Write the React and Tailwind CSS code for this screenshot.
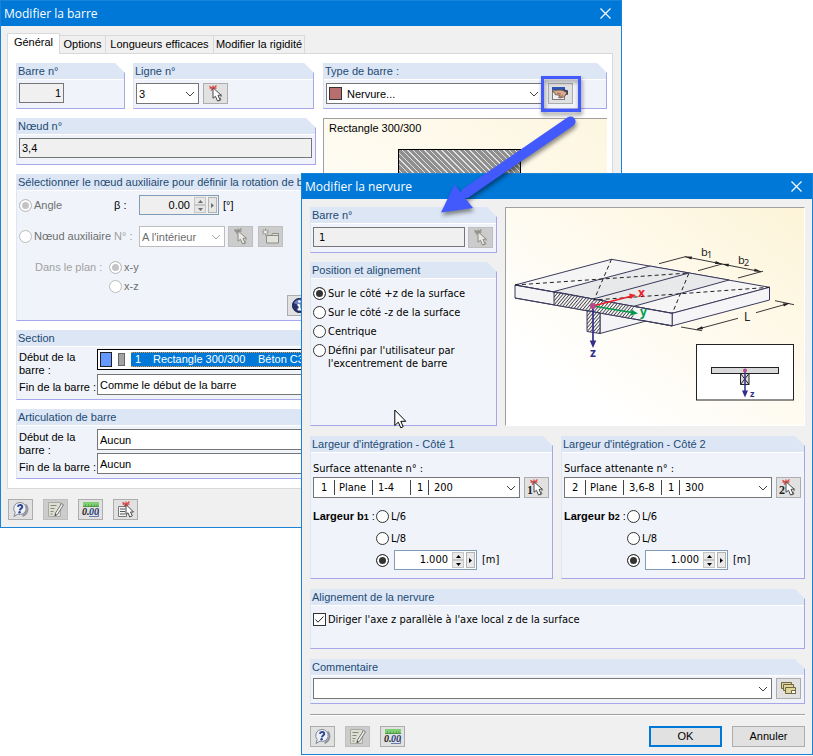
import React from "react";

const INK = "#3c3a5c";

function Chevron({ muted }) {
  return (
    <svg
      className="pointer-events-none absolute right-1 top-1/2 -translate-y-1/2"
      width="10"
      height="7"
      viewBox="0 0 10 7"
      fill="none"
      stroke={muted ? "#a8a8a8" : "#404040"}
      aria-hidden="true"
    >
      <path d="M1 1.5 5 5.5 9 1.5" />
    </svg>
  );
}

function Combo({ id, label, value, muted, swatch, className = "", children }) {
  return (
    <div className={`relative h-[21px] ${className}`}>
      <select
        id={id}
        aria-label={label}
        disabled={muted}
        className={`block h-full w-full appearance-none rounded-none border bg-white pr-4 leading-4 opacity-100 outline-none ${
          muted ? "border-[#bdbdbd] text-[#6d6d6d]" : "border-[#767676]"
        } ${swatch ? "pl-5" : "pl-0.5"} ${children ? "text-transparent" : ""}`}
      >
        <option>{value}</option>
      </select>
      {swatch && (
        <span className="pointer-events-none absolute left-[3px] top-1 size-[13px] border border-[#333] bg-[#b76e6e]" />
      )}
      {children}
      <Chevron muted={muted} />
    </div>
  );
}

function Group({ title, className = "", bodyClass = "", children }) {
  return (
    <section
      className={`flex flex-col border-b border-l border-r border-b-[#a6a6e8] border-l-[#dce6f4] border-r-[#a6a6e8] bg-[#f0f4fa] [clip-path:polygon(0_0,calc(100%-10px)_0,100%_10px,100%_100%,0_100%)] ${className}`}
    >
      <h2 className="h-[17px] shrink-0 whitespace-nowrap border-b border-white bg-[#dce6f4] pl-px font-['Liberation_Sans',Arial,sans-serif] text-[11px] leading-4 text-[#1d4a75]">
        {title}
      </h2>
      <div className={bodyClass}>{children}</div>
    </section>
  );
}

function IconButton({ label, muted, children }) {
  return (
    <button
      type="button"
      aria-label={label}
      disabled={muted}
      className={`flex h-[21px] w-[25px] shrink-0 items-center justify-center border ${
        muted ? "border-[#bfbfbf] bg-[#cccccc]" : "border-[#adadad] bg-[#e1e1e1]"
      }`}
    >
      {children}
    </button>
  );
}

function PickIcon({ digit, muted }) {
  return (
    <svg width="21" height="19" viewBox="0 0 21 19" aria-hidden="true">
      <path
        d="M4.500 2.200 10 6M11.500 1.500 6 6.500M4.500 4.200H11.500M8 1.500V4"
        stroke={muted ? "#8f8f8b" : "#dc4a4a"}
        strokeWidth="1.300"
      />
      <path d="M16 9.500 17.300 12.500 15 12.500 16.500 16 13.500 17.800Z" fill={muted ? "#a3a39f" : "#777"} />
      <path
        d="M8 3.800V14.200L10.500 12.300 12.500 17 15 15.800 13 11.400 16 11Z"
        fill={muted ? "#e9e9e4" : "#fff"}
        stroke={muted ? "#8a8a85" : "#4b4b4b"}
      />
      {digit && (
        <text x="1" y="16" fontFamily="Liberation Serif, serif" fontSize="12" fontWeight="700" fill="#222">
          {digit}
        </text>
      )}
    </svg>
  );
}

function NewNodeIcon() {
  return (
    <svg width="21" height="19" viewBox="0 0 21 19" aria-hidden="true">
      <path d="M6.500 8.500h5l1-2h6v9.500h-12z" fill="#e2e2dc" stroke="#8c8c86" />
      <path d="M7 8.500h11.500" stroke="#8c8c86" />
      <path d="M5.500 1.500v7M2 5h7M3 2.500l5 5M8 2.500l-5 5" stroke="#8b8b85" />
      <circle cx="5.500" cy="5" r="1.500" fill="#eee" />
    </svg>
  );
}

function HandIcon() {
  return (
    <svg width="21" height="17" viewBox="0 0 21 17" aria-hidden="true">
      <rect x="2.500" y="2.500" width="12" height="12" fill="#eef0f3" stroke="#7c7c7c" />
      <path d="M2 2h13v3.500H2z" fill="#2f55b4" />
      <path d="M13 4l5 1.500v4l-4 1z" fill="#2c3c6e" />
      <path
        d="M2.500 6.500C6 4.800 10 4.800 13 5.500l4 2-2 3.500c-2 2-4.500 2-6.500 1.500L10 10.500 5 9.500 5 8z"
        fill="#d8ab90"
        stroke="#6f4b3c"
        strokeWidth=".8"
      />
      <path d="M7 8l4 1M10 12l3-1.500" stroke="#6f4b3c" strokeWidth=".7" />
    </svg>
  );
}

function HelpIcon() {
  return (
    <svg width="17" height="17" viewBox="0 0 17 17" aria-hidden="true">
      <path d="M13.500 3.500a7 7 0 0 1-3 11.500" fill="none" stroke="#8f949e" strokeWidth="2" />
      <path d="M8 1.500a6 6 0 1 1-2 11.600L2 15.500l1.200-4A6 6 0 0 1 8 1.500z" fill="#eef1f8" stroke="#85888f" />
      <path d="M5.800 5.800C6.300 3.400 10.600 3.600 10.200 6c-.2 1.500-2.100 1.500-2.300 3.300" fill="none" stroke="#2c4793" strokeWidth="2" />
      <circle cx="7.600" cy="11.300" r="1.200" fill="#2c4793" />
    </svg>
  );
}

function NoteIcon() {
  return (
    <svg width="21" height="17" viewBox="0 0 21 17" aria-hidden="true">
      <path d="M3.500 1.500h12v14h-12z" fill="#dddfd3" stroke="#a9aaa2" />
      <path d="M5.500 4.500h6M5.500 7.500h4M5.500 10.500h3M5.500 13h2" stroke="#85867e" />
      <path d="M10.500 12 16.500 2.500l2 1.300-6 9.500-2.500 1.700z" fill="#efefe9" stroke="#777" />
      <path d="M9.500 15l.8-2.300 1.500 1z" fill="#444" />
    </svg>
  );
}

function UnitsIcon() {
  return (
    <svg width="21" height="17" viewBox="0 0 21 17" aria-hidden="true">
      <rect x="3" y="1" width="16" height="5" fill="#7fd072" />
      <path d="M3 5.500h16M5.500 5V3.500M8.500 5V3.500M11.500 5V3.500M14.500 5V3.500M17 5V3.500" stroke="#4f9a46" />
      <path d="M9 15.500h9.500V8" fill="none" stroke="#6b7bb0" />
      <text x="2" y="14" fontFamily="Liberation Serif, serif" fontStyle="italic" fontWeight="700" fontSize="10" fill="#222">
        0.
      </text>
      <text x="9" y="14" fontFamily="Liberation Serif, serif" fontStyle="italic" fontWeight="700" fontSize="10" fill="#2b3e78">
        00
      </text>
    </svg>
  );
}

function ListPickIcon() {
  return (
    <svg width="21" height="19" viewBox="0 0 21 19" aria-hidden="true">
      <path d="M3.500 6.500h8v10h-8z" fill="#f5f5f5" stroke="#777" />
      <path d="M5 9h5M5 11.500h5M5 14h5" stroke="#555" />
      <path d="M7.500 2.200 13 6M14.500 1.500 9 6.500M7.500 4.200H14.500M11 1.500V4" stroke="#dc4a4a" strokeWidth="1.300" />
      <path d="M11 4.500V14.500L13 12.800 14.800 17 17.300 15.800 15.500 12H18.500z" fill="#fff" stroke="#444" />
    </svg>
  );
}

function InfoIcon() {
  return (
    <svg width="17" height="17" viewBox="0 0 17 17" aria-hidden="true">
      <circle cx="8.500" cy="8.500" r="7" fill="#24336e" stroke="#111a42" />
      <path d="M3 6a6 6 0 0 1 11 0c-3 2-8 2-11 0z" fill="#6f82bb" />
      <path d="M8.500 7.500v5M6.500 8h2M6.500 12.500h4" stroke="#fff" strokeWidth="2" />
      <circle cx="8.300" cy="4.500" r="1.300" fill="#fff" />
    </svg>
  );
}

function CardsIcon() {
  return (
    <svg width="19" height="15" viewBox="0 0 19 15" fill="#e0d59b" stroke="#70673e" aria-hidden="true">
      <path d="M2.500 1.500h10v6h-10z" />
      <path d="M4.500 3.500h10v6h-10z" />
      <path d="M6.500 6.500h10v6h-10z" />
      <path d="M12.500 9.500h4v3h-4z" fill="#fff" />
    </svg>
  );
}

function Radio({ name, label, checked, muted, labelClass = "" }) {
  return (
    <label className={`flex items-start gap-[2px] leading-[13px] ${muted ? "text-[#6d6d6d]" : ""} ${labelClass}`}>
      <input
        type="radio"
        name={name}
        defaultChecked={checked}
        disabled={muted}
        aria-label={label ? undefined : "Valeur définie"}
        className="size-[13px] shrink-0 appearance-none rounded-full border border-[#333] bg-white checked:bg-[#333] checked:shadow-[inset_0_0_0_2px_white] disabled:border-[#bcbcbc] checked:disabled:bg-[#c4c4c4]"
      />
      {label}
    </label>
  );
}

function Spinner({ id, label, value, muted, className = "" }) {
  const arrow = muted ? "#6d6d6d" : "#000";
  const face = muted ? "bg-[#e6e6e6]" : "bg-[#e9e9e9]";
  return (
    <div className={`flex h-5 items-stretch border border-[#7f9db9] p-px ${muted ? "bg-[#efefef]" : "bg-white"} ${className}`}>
      <input
        id={id}
        aria-label={label}
        defaultValue={value}
        readOnly={muted}
        className="w-0 min-w-0 flex-1 bg-transparent pr-1 text-right outline-none"
      />
      <div className="flex w-3 flex-col">
        <button type="button" aria-label="Augmenter" className={`flex flex-1 items-center justify-center border border-[#c6c6c6] ${face}`}>
          <svg width="5" height="3" viewBox="0 0 5 3"><path d="M2.500 0 5 3H0z" fill={arrow} /></svg>
        </button>
        <button type="button" aria-label="Diminuer" className={`flex flex-1 items-center justify-center border border-[#c6c6c6] ${face}`}>
          <svg width="5" height="3" viewBox="0 0 5 3"><path d="M2.500 3 5 0H0z" fill={arrow} /></svg>
        </button>
      </div>
      <button type="button" aria-label="Choisir" className={`ml-0.5 flex w-[9px] items-center justify-center border border-[#b4b4b4] ${face}`}>
        <svg width="3" height="5" viewBox="0 0 3 5"><path d="M0 0 3 2.500 0 5z" fill={arrow} /></svg>
      </button>
    </div>
  );
}

function TitleBar({ title }) {
  return (
    <header className="flex h-[25px] items-center justify-between bg-[#0078d7] pl-[3px] pr-2.5 font-['Open_Sans','Noto_Sans',sans-serif] text-xs text-white">
      <h1>{title}</h1>
      <button type="button" aria-label="Fermer">
        <svg width="11" height="11" viewBox="0 0 11 11" stroke="#fff" strokeWidth="1.200">
          <path d="M.5.5l10 10M10.500.5l-10 10" />
        </svg>
      </button>
    </header>
  );
}

function EndRows({ prefix, first, second, gap }) {
  return (
    <>
      <div className="flex w-20 shrink-0 flex-col pl-0.5 pt-0.5 leading-[13px]">
        <label htmlFor={`${prefix}-start`} className="w-16">Début de la barre :</label>
        <label htmlFor={`${prefix}-end`} className="mt-1 whitespace-nowrap">Fin de la barre :</label>
      </div>
      <div className={`flex flex-1 flex-col ${gap}`}>
        {first}
        {second}
      </div>
    </>
  );
}

function BarDialog() {
  const tabs = ["Options", "Longueurs efficaces", "Modifier la rigidité"];
  return (
    <div className="absolute left-0 top-0 w-[622px] border border-[#1883d7] bg-[#f0f0f0] font-['Liberation_Sans',Arial,sans-serif] text-[11px]">
      <TitleBar title="Modifier la barre" />
      <div className="pb-[7px] pl-1.5 pr-2 pt-[7px]">
        <div role="tablist" className="flex items-end">
          <button type="button" role="tab" aria-selected="true" className="relative z-10 -mb-px h-[21px] w-[53px] border border-b-0 border-[#d9d9d9] bg-white pb-1">
            Général
          </button>
          {tabs.map((t, i) => (
            <button
              key={t}
              type="button"
              role="tab"
              aria-selected="false"
              className={`h-[18px] whitespace-nowrap border-r border-t border-[#d9d9d9] ${i === 0 ? "w-[46px]" : i === 1 ? "w-[108px]" : "w-[91px]"}`}
            >
              {t}
            </button>
          ))}
        </div>
        <div role="tabpanel" className="flex flex-col gap-[9px] border border-[#d9d9d9] bg-white pb-[9px] pl-2 pr-[5px] pt-[9px]">
          <div className="flex gap-[7px]">
            <div className="flex w-[300px] flex-col gap-[9px]">
              <div className="flex gap-2 pr-0.5">
                <Group title="Barre n°" className="h-[46px] w-[109px]" bodyClass="pl-0.5 pt-[3px]">
                  <input aria-label="Barre n°" readOnly value="1" className="block h-5 w-[45px] border border-[#767676] bg-[#f0f0f0] pr-0.5 text-right outline-none" />
                </Group>
                <Group title="Ligne n°" className="h-[46px] flex-1" bodyClass="flex gap-1 pl-0.5 pt-[3px]">
                  <Combo label="Ligne n°" value="3" className="w-[63px]" />
                  <IconButton label="Sélectionner la ligne"><PickIcon /></IconButton>
                </Group>
              </div>
              <Group title="Nœud n°" className="h-[47px]" bodyClass="pl-0.5 pr-[3px] pt-[3px]">
                <input aria-label="Nœud n°" readOnly value="3,4" className="block h-5 w-full border border-[#767676] bg-[#f0f0f0] pl-0.5 outline-none" />
              </Group>
              <Group
                title="Sélectionner le nœud auxiliaire pour définir la rotation de barre"
                className="h-[147px]"
                bodyClass="flex flex-1 flex-col pl-0.5 pr-[3px] pt-1"
              >
                <div className="flex items-center">
                  <Radio name="aux" label="Angle" checked muted labelClass="w-[95px]" />
                  <label htmlFor="beta" className="w-[25px]">β :</label>
                  <Spinner id="beta" label="Angle β" value="0.00" muted className="w-20" />
                  <span className="ml-1">[°]</span>
                </div>
                <div className="mt-[11px] flex items-center">
                  <Radio name="aux" label="Nœud auxiliaire" muted labelClass="w-[95px] whitespace-nowrap" />
                  <label htmlFor="auxnode" className="w-[25px] text-[#a0a0a0]">N° :</label>
                  <Combo id="auxnode" value="A l'intérieur" muted className="w-[86px]" />
                  <div className="ml-[3px] flex gap-[5px]">
                    <IconButton label="Sélectionner le nœud" muted><PickIcon muted /></IconButton>
                    <IconButton label="Nouveau nœud" muted><NewNodeIcon /></IconButton>
                  </div>
                </div>
                <div className="mt-3.5 flex pl-4">
                  <span className="w-[74px] leading-[13px] text-[#a0a0a0]">Dans le plan :</span>
                  <div className="flex flex-col gap-1.5">
                    <Radio name="plane" label="x-y" checked muted />
                    <Radio name="plane" label="x-z" muted />
                  </div>
                </div>
                <div className="mt-0.5 flex justify-end">
                  <IconButton label="Informations"><InfoIcon /></IconButton>
                </div>
              </Group>
            </div>
            <div className="flex min-w-0 flex-1 flex-col gap-[9px]">
              <Group title="Type de barre :" className="h-[46px]" bodyClass="flex gap-[5px] pl-0.5 pt-[3px]">
                <Combo label="Type de barre" value="Nervure..." swatch className="w-[217px]" />
                <IconButton label="Modifier le type de barre"><HandIcon /></IconButton>
              </Group>
              <div className="flex-1 border-l border-t border-[#a0a0a0] bg-linear-to-tr from-white to-[#fdf6e0] px-[5px] pt-px">
                <p>Rectangle 300/300</p>
                <div className="ml-[69px] mt-3 size-[123px] border border-black bg-[repeating-linear-gradient(45deg,#8f8f8f_0_3px,#e0e0e0_3px_4px)]" />
              </div>
            </div>
          </div>
          <Group title="Section" className="h-[70px]" bodyClass="flex pt-0.5">
            <EndRows
              prefix="section"
              gap="gap-1"
              first={
                <Combo id="section-start" value="1 Rectangle 300/300 Béton C30/37">
                  <span className="pointer-events-none absolute inset-0 flex items-stretch whitespace-pre border border-black bg-white p-0.5 text-white" aria-hidden="true">
                    <i className="w-3 shrink-0 border border-[#222] bg-[#6699ff]" />
                    <i className="mx-1.5 my-px w-[7px] shrink-0 border border-[#666] bg-[#a3a3a3]" />
                    <span className="flex flex-1 items-center border-y border-dotted border-[#f79433] bg-[#0078d7] pl-1">
                      <b className="w-[18px] font-normal">1</b>
                      <b className="w-[105px] font-normal">Rectangle 300/300</b>
                      <b className="font-normal">Béton C30/37</b>
                    </span>
                  </span>
                </Combo>
              }
              second={<Combo id="section-end" value="Comme le début de la barre" />}
            />
          </Group>
          <Group title="Articulation de barre" className="h-[70px]" bodyClass="flex pt-[3px]">
            <EndRows
              prefix="hinge"
              gap="gap-[3px]"
              first={<Combo id="hinge-start" value="Aucun" />}
              second={<Combo id="hinge-end" value="Aucun" />}
            />
          </Group>
        </div>
        <div className="mt-2.5 flex gap-2.5 pl-px">
          <IconButton label="Aide"><HelpIcon /></IconButton>
          <IconButton label="Commentaire" muted><NoteIcon /></IconButton>
          <IconButton label="Unités et décimales"><UnitsIcon /></IconButton>
          <IconButton label="Sélection dans la liste"><ListPickIcon /></IconButton>
        </div>
      </div>
    </div>
  );
}

function RibDiagram() {
  const sans = "Noto Sans, Open Sans, sans-serif";
  return (
    <svg className="block h-auto w-full" viewBox="506 208 298 217" fill="none" role="img" aria-label="Nervure sous une dalle">
      <defs>
        <pattern id="hatch" width="2.500" height="2.500" patternUnits="userSpaceOnUse" patternTransform="rotate(40)">
          <rect width="2.500" height="2.500" fill="#f2f2f4" />
          <path d="M0 0V2.500" stroke="#222" strokeWidth="1.400" />
        </pattern>
      </defs>
      <g stroke={INK} strokeWidth="1" strokeLinejoin="round">
        <path d="M587 311 600 313V333.500L646 321 672 326 600 305z" fill="#f4f4f6" />
        <path d="M515 285 611.500 259.300 769.500 287.300 672.300 313.300z" fill="#f5f5f6" />
        <path d="M554 291.500 650 266 729 280 633 306.500z" fill="#e8e9ea" />
        <path d="M593 299 689 273" />
        <path d="M515 285 672.300 313.300V325.800L515 298z" fill="#f5f5f6" />
        <path d="M672.300 313.300 769.500 287.300V300L672.300 325.800z" fill="#f5f5f8" />
        <path d="M554 292 633.500 306.500V319L554 305z" fill="url(#hatch)" stroke="none" />
        <path d="M554 292V305" />
        <path d="M587 310.500 600 313V333.500L587 331.500z" fill="url(#hatch)" />
        <path d="M515 285 672.300 313.300M515 298 672.300 325.800" />
      </g>
      <g stroke="#222" strokeDasharray="4 3">
        <path d="M515 285 689 273 672.300 313.300M611.500 259.300 594 300 769.500 287.300" />
      </g>
      <g stroke="#222" strokeWidth=".9">
        <path d="M659 263.700 686 256.500M698 270.700 722 264M738 278 763 271.200M685 256.700 761 271.700" />
        <path d="M775 300.700 794 304.700M789 303.300 756 312.700M738 318.300 697 329.300M681 327 702 330.700" />
      </g>
      <g fill="#222">
        <path d="M685 256.700l7-.2-.6 3zM722 264l-7-.1.700-3zM722 264l7-.2-.6 3zM761 271.500l-7 .1.700-3zM790 303l-7 .5.900 3zM696 329.500l7-.3-.9-3z" />
        <g fontFamily={sans} fontSize="11">
          <text x="701" y="256">b</text>
          <text x="738" y="264">b</text>
          <text x="744" y="321" fontSize="12">L</text>
        </g>
        <g fontFamily={sans} fontSize="9">
          <text x="707" y="258">1</text>
          <text x="744" y="266">2</text>
        </g>
      </g>
      <path d="M593 306 630 296.500" stroke="#e8232a" strokeWidth="1.500" />
      <path d="M636 295 629 293.500 630.500 299z" fill="#e8232a" />
      <path d="M593 306 632 312.500" stroke="#009b4a" strokeWidth="1.500" />
      <path d="M638 313.500 631.500 309.500 630.500 315.500z" fill="#009b4a" />
      <path d="M593 306V342" stroke="#342d8c" strokeWidth="1.700" />
      <path d="M593 348 589.700 340.500H596.300z" fill="#342d8c" />
      <circle cx="593" cy="306" r="3" fill="#b8488a" />
      <g fontFamily={sans} fontWeight="700" fontSize="12">
        <text x="638" y="297" fill="#e8232a">x</text>
        <text x="640" y="316" fill="#009b4a">y</text>
        <text x="590" y="357" fill="#342d8c">z</text>
      </g>
      <rect x="696.500" y="344.500" width="97" height="55.500" fill="#fff" stroke="#222" />
      <rect x="711.500" y="367.500" width="67" height="6" fill="#d8d9da" stroke="#222" />
      <path d="M740.500 373.500h8.500v11h-8.500zl8.500 11m0-11-8.500 11" fill="#ddd" stroke="#222" />
      <path d="M745 371V392" stroke="#342d8c" strokeWidth="1.500" />
      <path d="M745 397.500 742 390.500H748z" fill="#342d8c" />
      <circle cx="745" cy="370.500" r="2" fill="#b8488a" />
      <text x="750" y="397" fontFamily={sans} fontWeight="700" fontSize="9" fill="#342d8c">z</text>
    </svg>
  );
}

function WidthGroup({ side, cells }) {
  const widths = ["w-[21px] pl-[7px]", "w-[38px] pl-1", "w-[38px] pl-[5px]", "w-[18px] pl-1.5", "pl-[5px]"];
  return (
    <Group title={`Largeur d'intégration - Côté ${side}`} className="h-[143px] min-w-0 flex-1" bodyClass="pl-0.5 pr-[3px] pt-2">
      <label htmlFor={`surface-${side}`} className="block leading-4">Surface attenante n° :</label>
      <div className="flex gap-1">
        <Combo id={`surface-${side}`} value={cells.join(" ")} className="flex-1">
          <span className="pointer-events-none absolute inset-y-[3px] left-px flex items-stretch leading-4" aria-hidden="true">
            {cells.map((c, i) => (
              <span key={i} className={`${widths[i]} ${i < 4 ? "border-r border-[#444]" : ""}`}>{c}</span>
            ))}
          </span>
        </Combo>
        <IconButton label={`Sélectionner la surface ${side}`}><PickIcon digit={side} /></IconButton>
      </div>
      <div role="radiogroup" aria-label={`Largeur b${side}`} className="mt-3 flex">
        <span className="w-[63px] whitespace-nowrap font-['Liberation_Sans',Arial,sans-serif] font-bold leading-[13px]">
          Largeur b<span className="text-[9px]">{side}</span><span className="font-normal"> :</span>
        </span>
        <div className="flex flex-col">
          <Radio name={`w${side}`} label="L/6" />
          <Radio name={`w${side}`} label="L/8" labelClass="mt-[9px]" />
          <div className="mt-[5px] flex items-center">
            <Radio name={`w${side}`} checked labelClass="w-[18px]" />
            <Spinner label={`Largeur b${side}`} value="1.000" className="w-[83px]" />
            <span className="ml-[5px]">[m]</span>
          </div>
        </div>
      </div>
    </Group>
  );
}

function RibDialog() {
  return (
    <div className="absolute left-[301px] top-[173px] w-[512px] border border-[#1883d7] bg-[#f0f0f0] font-['DejaVu_Sans_Condensed','Noto_Sans',sans-serif] text-[11px]">
      <TitleBar title="Modifier la nervure" />
      <div className="flex flex-col gap-2.5 pb-[7px] pl-2 pr-[7px] pt-2">
        <div className="flex gap-2">
          <div className="flex w-[187px] shrink-0 flex-col gap-[9px]">
            <Group title="Barre n°" className="h-[46px]" bodyClass="flex gap-[3px] pl-0.5 pr-[3px] pt-[3px]">
              <input aria-label="Barre n°" readOnly value="1" className="h-5 w-0 min-w-0 flex-1 border border-[#767676] bg-[#f0f0f0] pl-[5px] outline-none" />
              <IconButton label="Sélectionner la barre" muted><PickIcon muted /></IconButton>
            </Group>
            <Group title="Position et alignement" className="flex-1" bodyClass="flex flex-col gap-[6px] pl-0.5 pt-2">
              <Radio name="position" label="Sur le côté +z de la surface" checked />
              <Radio name="position" label="Sur le côté -z de la surface" />
              <Radio name="position" label="Centrique" />
              <Radio name="position" label={<span>Défini par l'utilisateur par<br />l'excentrement de barre</span>} />
            </Group>
          </div>
          <div className="min-w-0 flex-1 border border-b-white border-l-[#a0a0a0] border-r-white border-t-[#a0a0a0] bg-linear-to-tr from-white from-20% to-[#fdf4d8]">
            <RibDiagram />
          </div>
        </div>
        <div className="grid grid-cols-[243px_1fr] gap-2">
          <WidthGroup side="1" cells={["1", "Plane", "1-4", "1", "200"]} />
          <WidthGroup side="2" cells={["2", "Plane", "3,6-8", "1", "300"]} />
        </div>
        <Group title="Alignement de la nervure" className="h-[60px]" bodyClass="pl-0.5 pt-[7px]">
          <label className="flex items-center gap-0.5 leading-[13px]">
            <span className="relative size-[13px]">
              <input type="checkbox" defaultChecked className="peer block size-[13px] appearance-none border border-[#333] bg-white" />
              <svg className="pointer-events-none absolute inset-0 hidden peer-checked:block" width="13" height="13" viewBox="0 0 13 13" fill="none" stroke="#222">
                <path d="M2.500 6.500 5 9.200 10.500 3.500" />
              </svg>
            </span>
            Diriger l'axe z parallèle à l'axe local z de la surface
          </label>
        </Group>
        <Group title="Commentaire" className="h-[45px]" bodyClass="flex gap-1 pl-0.5 pr-[3px] pt-0.5">
          <Combo label="Commentaire" value="" className="flex-1" />
          <IconButton label="Commentaires prédéfinis"><CardsIcon /></IconButton>
        </Group>
        <hr className="h-0.5 border-b border-t border-b-white border-t-[#a0a0a0]" />
        <footer className="flex items-center gap-2.5 font-['Liberation_Sans',Arial,sans-serif]">
          <IconButton label="Aide"><HelpIcon /></IconButton>
          <IconButton label="Commentaire" muted><NoteIcon /></IconButton>
          <IconButton label="Unités et décimales"><UnitsIcon /></IconButton>
          <button type="button" className="ml-auto h-[21px] w-[73px] border-2 border-[#0078d7] bg-[#e1e1e1]">OK</button>
          <button type="button" className="h-[21px] w-[73px] border border-[#adadad] bg-[#e1e1e1]">Annuler</button>
        </footer>
      </div>
    </div>
  );
}

function Callout() {
  return (
    <svg className="pointer-events-none absolute left-[401px] top-[66px] z-20" width="200" height="370" viewBox="401 66 200 370" aria-hidden="true">
      <g className="drop-shadow-[1px_3px_2px_rgba(0,0,0,0.45)]">
        <rect x="542.500" y="77.500" width="37" height="33" fill="none" stroke="#4259fb" strokeWidth="3" />
        <path d="M570.500 121.500 466 193" stroke="#4259fb" strokeWidth="10" strokeLinecap="round" />
        <path d="M441 212.500 454.500 184.500 473 208z" fill="#4259fb" />
      </g>
    </svg>
  );
}

function Pointer() {
  return (
    <svg className="pointer-events-none absolute left-[394px] top-[409px] z-20" width="13" height="20" viewBox="0 0 13 20" aria-hidden="true">
      <path d="M.8 1V16.500L4.300 13.200 6.800 18.800 9.200 17.700 6.800 12.300H11.800z" fill="#fff" stroke="#000" />
    </svg>
  );
}

export default function App() {
  return (
    <main className="relative min-h-screen min-w-[813px] bg-white text-black">
      <BarDialog />
      <RibDialog />
      <Callout />
      <Pointer />
    </main>
  );
}
